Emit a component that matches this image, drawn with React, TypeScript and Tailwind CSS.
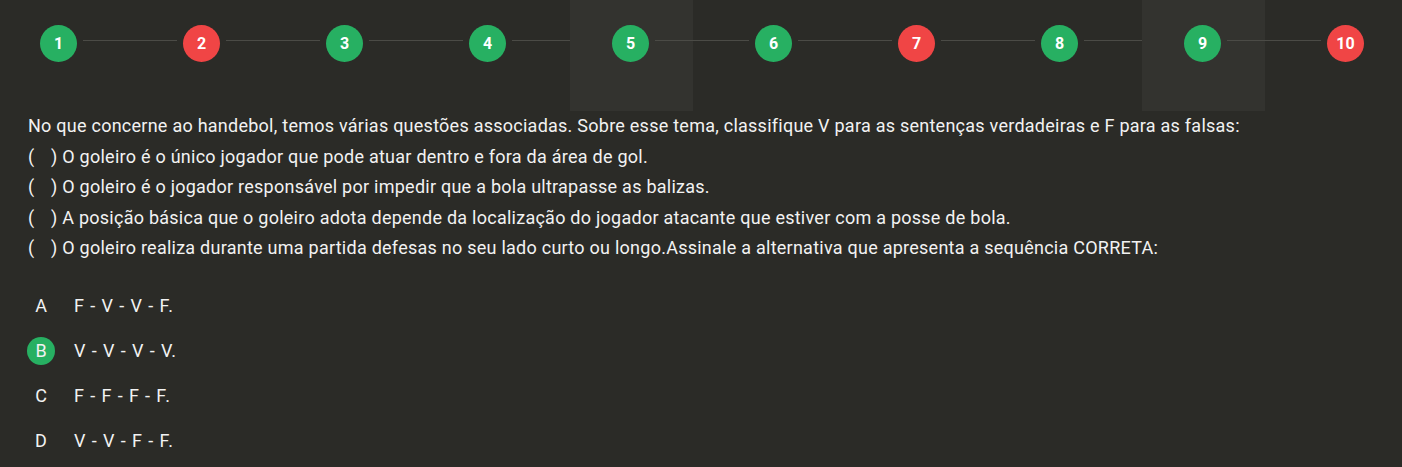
const steps = [
  { n: 1, ok: true },
  { n: 2, ok: false },
  { n: 3, ok: true },
  { n: 4, ok: true },
  { n: 5, ok: true, active: true },
  { n: 6, ok: true },
  { n: 7, ok: false },
  { n: 8, ok: true },
  { n: 9, ok: true, active: true },
  { n: 10, ok: false },
];

const statements = [
  "O goleiro é o único jogador que pode atuar dentro e fora da área de gol.",
  "O goleiro é o jogador responsável por impedir que a bola ultrapasse as balizas.",
  "A posição básica que o goleiro adota depende da localização do jogador atacante que estiver com a posse de bola.",
  "O goleiro realiza durante uma partida defesas no seu lado curto ou longo.Assinale a alternativa que apresenta a sequência CORRETA:",
];

const options = [
  { letter: "A", text: "F - V - V - F." },
  { letter: "B", text: "V - V - V - V.", selected: true },
  { letter: "C", text: "F - F - F - F." },
  { letter: "D", text: "V - V - F - F." },
];

export default function App() {
  return (
    <div
      className="min-h-[467px] w-full bg-[#2b2b27] text-[#f2f2f2]"
      style={{ fontFamily: "Roboto, 'Open Sans', sans-serif" }}
    >
      <div className="flex h-[111px] items-start pl-[40px] pr-[38px] pt-[25px]">
        {steps.map((s, i) => (
          <div key={s.n} className={`flex items-start ${i < steps.length - 1 ? "flex-1" : ""}`}>
            <div className="relative">
              {s.active && (
                <div className="absolute -top-[25px] left-[-42px] h-[111px] w-[123px] bg-[#33332f]" />
              )}
              <div
                className={`relative flex h-[37px] w-[37px] items-center justify-center rounded-full text-[16px] font-bold text-white ${
                  s.ok ? "bg-[#27b062]" : "bg-[#f04545]"
                }`}
              >
                {s.n}
              </div>
            </div>
            {i < steps.length - 1 && (
              <div className="relative mx-[6px] mt-[15px] h-px flex-1 bg-[#4b4b46]" />
            )}
          </div>
        ))}
      </div>

      <div className="px-[28px] text-[18px] leading-[30.5px] tracking-[0.25px]">
        <p>
          No que concerne ao handebol, temos várias questões associadas. Sobre esse tema, classifique V para as
          sentenças verdadeiras e F para as falsas:
        </p>
        {statements.map((t) => (
          <p key={t} className="flex">
            <span className="w-[23px] shrink-0">(</span>
            <span>) {t}</span>
          </p>
        ))}
      </div>

      <div className="mt-[28px] flex flex-col gap-[17px] px-[27px] pb-[6px] text-[18px]">
        {options.map((o) => (
          <div key={o.letter} className="flex h-[28px] items-center">
            <div
              className={`flex h-[28px] w-[28px] items-center justify-center rounded-full ${
                o.selected ? "bg-[#27b062]" : ""
              }`}
            >
              {o.letter}
            </div>
            <span className="ml-[19px] tracking-[0.9px]">{o.text}</span>
          </div>
        ))}
      </div>
    </div>
  );
}
